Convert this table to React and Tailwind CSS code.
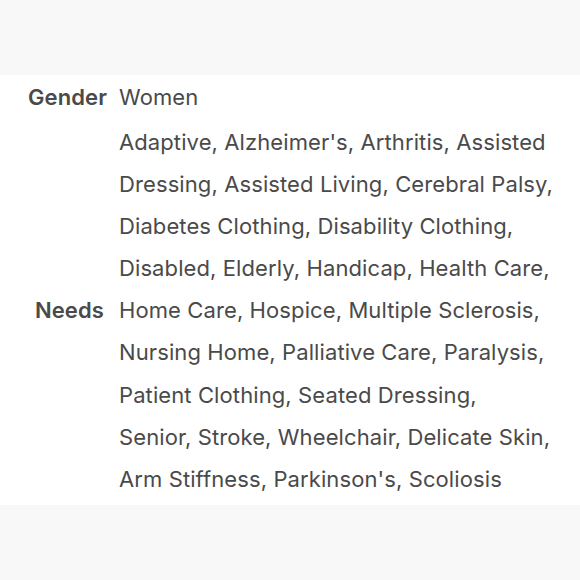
const needs = [
  "Adaptive, Alzheimer's, Arthritis, Assisted",
  "Dressing, Assisted Living, Cerebral Palsy,",
  "Diabetes Clothing, Disability Clothing,",
  "Disabled, Elderly, Handicap, Health Care,",
  "Home Care, Hospice, Multiple Sclerosis,",
  "Nursing Home, Palliative Care, Paralysis,",
  "Patient Clothing, Seated Dressing,",
  "Senior, Stroke, Wheelchair, Delicate Skin,",
  "Arm Stiffness, Parkinson's, Scoliosis",
];

export default function App() {
  return (
    <div
      className="w-[580px] h-[580px] flex flex-col bg-[#f8f8f8] text-[#4a4a4a]"
      style={{ fontFamily: "Inter, 'Noto Sans', sans-serif" }}
    >
      <div className="h-[75px]" />
      <div className="bg-white pt-[1px] pb-[5px] text-[22px] leading-[42px] tracking-[0.1px]">
        <div className="grid grid-cols-[108px_1fr] gap-x-[11px] gap-y-[3px]">
          <div className="text-right font-semibold pr-[1px]">Gender</div>
          <div>Women</div>
          <div className="text-right font-semibold self-center pr-[4px]">Needs</div>
          <div className="leading-[42.1px]">
            {needs.map((line) => (
              <div key={line}>{line}</div>
            ))}
          </div>
        </div>
      </div>
    </div>
  );
}
